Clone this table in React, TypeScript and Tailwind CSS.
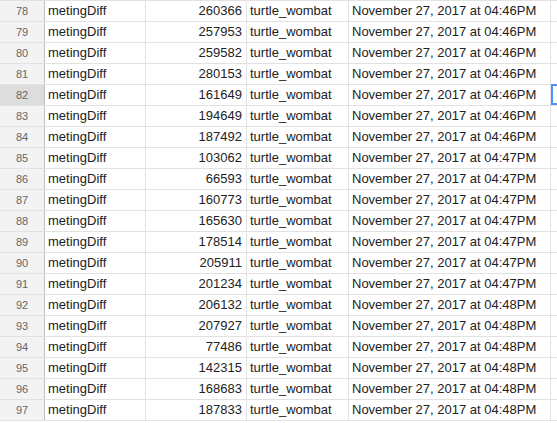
import React from 'react';

type Row = { n: number; value: number; time: string };

const ROWS: Row[] = [
  { n: 78, value: 260366, time: '04:46PM' },
  { n: 79, value: 257953, time: '04:46PM' },
  { n: 80, value: 259582, time: '04:46PM' },
  { n: 81, value: 280153, time: '04:46PM' },
  { n: 82, value: 161649, time: '04:46PM' },
  { n: 83, value: 194649, time: '04:46PM' },
  { n: 84, value: 187492, time: '04:46PM' },
  { n: 85, value: 103062, time: '04:47PM' },
  { n: 86, value: 66593, time: '04:47PM' },
  { n: 87, value: 160773, time: '04:47PM' },
  { n: 88, value: 165630, time: '04:47PM' },
  { n: 89, value: 178514, time: '04:47PM' },
  { n: 90, value: 205911, time: '04:47PM' },
  { n: 91, value: 201234, time: '04:47PM' },
  { n: 92, value: 206132, time: '04:48PM' },
  { n: 93, value: 207927, time: '04:48PM' },
  { n: 94, value: 77486, time: '04:48PM' },
  { n: 95, value: 142315, time: '04:48PM' },
  { n: 96, value: 168683, time: '04:48PM' },
  { n: 97, value: 187833, time: '04:48PM' },
];

const SELECTED = 82;

const App: React.FC = () => {
  return (
    <div className="w-[557px] h-[423px] overflow-hidden bg-white font-['Liberation_Sans',Arial,sans-serif] text-[13px] text-[#222]">
      <div className="h-px bg-[#e2e2e2]" />
      {ROWS.map((r) => {
        const selected = r.n === SELECTED;
        return (
          <div key={r.n} className="flex h-[21px] border-b border-[#e2e2e2]">
            <div
              className={`w-[45px] shrink-0 flex items-center justify-center border-r border-[#c0c0c0] text-[11px] text-[#666] ${
                selected ? 'bg-[#dddddd]' : 'bg-[#f3f3f3]'
              }`}
            >
              {r.n}
            </div>
            <div className="w-[101px] shrink-0 flex items-center pl-[3px] border-r border-[#e2e2e2]">metingDiff</div>
            <div className="w-[101px] shrink-0 flex items-center justify-end pr-[4px] border-r border-[#e2e2e2]">{r.value}</div>
            <div className="w-[102px] shrink-0 flex items-center pl-[3px] border-r border-[#e2e2e2]">turtle_wombat</div>
            <div className="w-[202px] shrink-0 flex items-center pl-[3px] border-r border-[#e2e2e2] whitespace-nowrap">
              November 27, 2017 at {r.time}
            </div>
            <div className="flex-1 relative">
              {selected && <div className="absolute left-0 top-[-1px] bottom-0 right-[-10px] border-2 border-[#4d90fe]" />}
            </div>
          </div>
        );
      })}
    </div>
  );
};

export default App;
